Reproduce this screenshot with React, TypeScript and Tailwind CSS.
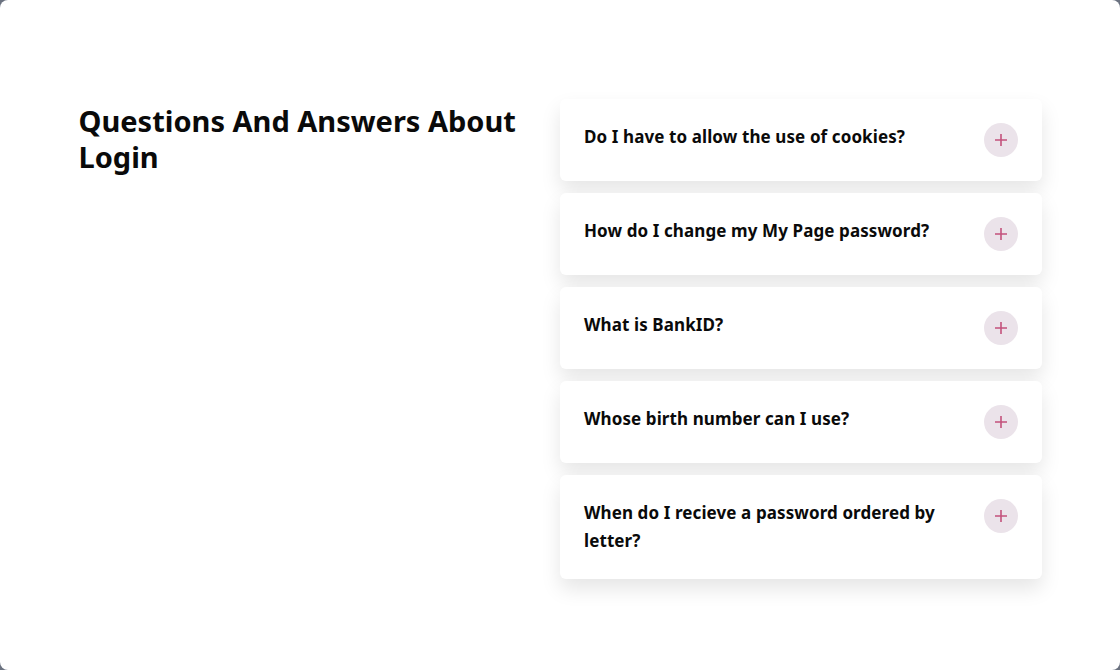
import React from 'react'

const questions = [
  'Do I have to allow the use of cookies?',
  'How do I change my My Page password?',
  'What is BankID?',
  'Whose birth number can I use?',
  'When do I recieve a password ordered by letter?',
]

function PlusButton() {
  return (
    <button className="flex h-[34px] w-[34px] shrink-0 items-center justify-center rounded-full bg-[#ebe3ea]">
      <svg width="14" height="14" viewBox="0 0 14 14" fill="none">
        <path d="M7 1v12M1 7h12" stroke="#c4527c" strokeWidth="1.6" />
      </svg>
    </button>
  )
}

export default function App() {
  return (
    <div className="min-h-screen bg-[#6b7280]" style={{ fontFamily: '"Noto Sans", "Open Sans", sans-serif' }}>
      <div className="h-[670px] rounded-lg bg-white">
        <div className="mx-auto grid w-[963px] grid-cols-2 pt-[99px]">
          <div className="pr-8 pt-[4px]">
            <h1 className="text-[29px] font-bold leading-[36px] text-[#0a0a0a]">
              Questions And Answers About Login
            </h1>
          </div>
          <div className="flex flex-col gap-3">
            {questions.map((q) => (
              <div
                key={q}
                className="flex items-start justify-between gap-6 rounded-md bg-white p-6 shadow-[0_10px_20px_rgba(0,0,0,0.1)]"
              >
                <div className="text-[17px] font-bold leading-[28px] tracking-[0.1px] text-[#0a0a0a]">{q}</div>
                <PlusButton />
              </div>
            ))}
          </div>
        </div>
      </div>
    </div>
  )
}
